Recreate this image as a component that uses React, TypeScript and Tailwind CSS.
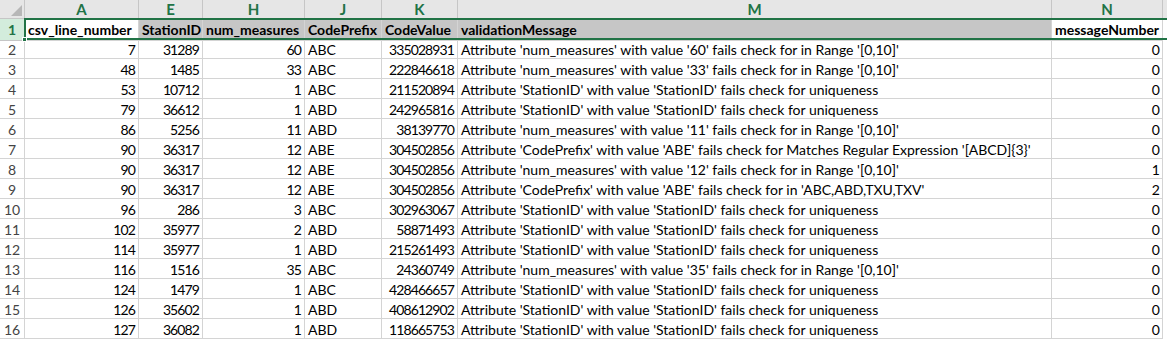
import React from "react";

const cols = ["A", "E", "H", "J", "K", "M", "N"];

const rows: [number, number, number, string, number, string, number][] = [
  [7, 31289, 60, "ABC", 335028931, "Attribute 'num_measures' with value '60' fails check for in Range '[0,10]'", 0],
  [48, 1485, 33, "ABC", 222846618, "Attribute 'num_measures' with value '33' fails check for in Range '[0,10]'", 0],
  [53, 10712, 1, "ABC", 211520894, "Attribute 'StationID' with value 'StationID' fails check for uniqueness", 0],
  [79, 36612, 1, "ABD", 242965816, "Attribute 'StationID' with value 'StationID' fails check for uniqueness", 0],
  [86, 5256, 11, "ABD", 38139770, "Attribute 'num_measures' with value '11' fails check for in Range '[0,10]'", 0],
  [90, 36317, 12, "ABE", 304502856, "Attribute 'CodePrefix' with value 'ABE' fails check for Matches Regular Expression '[ABCD]{3}'", 0],
  [90, 36317, 12, "ABE", 304502856, "Attribute 'num_measures' with value '12' fails check for in Range '[0,10]'", 1],
  [90, 36317, 12, "ABE", 304502856, "Attribute 'CodePrefix' with value 'ABE' fails check for in 'ABC,ABD,TXU,TXV'", 2],
  [96, 286, 3, "ABC", 302963067, "Attribute 'StationID' with value 'StationID' fails check for uniqueness", 0],
  [102, 35977, 2, "ABD", 58871493, "Attribute 'StationID' with value 'StationID' fails check for uniqueness", 0],
  [114, 35977, 1, "ABD", 215261493, "Attribute 'StationID' with value 'StationID' fails check for uniqueness", 0],
  [116, 1516, 35, "ABC", 24360749, "Attribute 'num_measures' with value '35' fails check for in Range '[0,10]'", 0],
  [124, 1479, 1, "ABC", 428466657, "Attribute 'StationID' with value 'StationID' fails check for uniqueness", 0],
  [126, 35602, 1, "ABD", 408612902, "Attribute 'StationID' with value 'StationID' fails check for uniqueness", 0],
  [127, 36082, 1, "ABD", 118665753, "Attribute 'StationID' with value 'StationID' fails check for uniqueness", 0],
];

const grid = "grid grid-cols-[25px_114px_64px_102px_77px_76px_594px_111px]";

const Num = ({ v }: { v: number }) => (
  <div className="h-5 border-r border-b border-[#d4d4d4] text-right pr-[3px] leading-[21px] tracking-[-0.9px] whitespace-nowrap overflow-hidden">{v}</div>
);
const Txt = ({ v }: { v: string }) => (
  <div className="h-5 border-r border-b border-[#d4d4d4] text-left pl-[3px] leading-[21px] whitespace-nowrap overflow-hidden">{v}</div>
);

export default function App() {
  const headerCells = ["csv_line_number", "StationID", "num_measures", "CodePrefix", "CodeValue", "validationMessage", "messageNumber"];
  return (
    <div className="w-[1167px] h-[340px] bg-white overflow-hidden text-black text-[14px]" style={{ fontFamily: "Lato, 'Liberation Sans', sans-serif" }}>
      {/* column letters */}
      <div className={`${grid} h-[19px] bg-[#e6e6e6]`}>
        <div className="border-r border-b border-[#c6c6c6] flex items-end justify-end pr-[2px] pb-[2px]">
          <svg width="11" height="11" viewBox="0 0 11 11">
            <polygon points="11,0 11,11 0,11" fill="#b7b7b7" />
          </svg>
        </div>
        {cols.map((c) => (
          <div key={c} className="border-r border-b border-[#c6c6c6] text-center font-bold text-[#217346] text-[15px] leading-[18px]">
            {c}
          </div>
        ))}
      </div>

      {/* row 1 (selected) */}
      <div className={`${grid} relative h-5`}>
        <div className="bg-[#d3ecdc] text-[#217346] font-bold text-center leading-[21px] border-r border-b border-[#c6c6c6]">1</div>
        {headerCells.map((h, i) => (
          <div
            key={h}
            className={`border-r border-b border-[#d4d4d4] font-bold pl-[3px] leading-[21px] whitespace-nowrap overflow-hidden ${
              i === 0 || i === 6 ? "bg-white" : "bg-[#c6c6c6]"
            }`}
          >
            {h}
          </div>
        ))}
        <div className="absolute left-[24px] right-[-4px] top-[-1px] bottom-[-1px] border-2 border-r-0 border-[#217346] pointer-events-none" />
        <div className="absolute left-[22px] bottom-[-3px] w-[5px] h-[5px] bg-[#217346] border border-white" />
      </div>

      {rows.map((r, i) => (
        <div key={i} className={grid}>
          <div className="h-5 border-r border-b border-[#d4d4d4] text-center text-[#444444] leading-[21px]">{i + 2}</div>
          <Num v={r[0]} />
          <Num v={r[1]} />
          <Num v={r[2]} />
          <Txt v={r[3]} />
          <Num v={r[4]} />
          <Txt v={r[5]} />
          <Num v={r[6]} />
        </div>
      ))}
    </div>
  );
}
